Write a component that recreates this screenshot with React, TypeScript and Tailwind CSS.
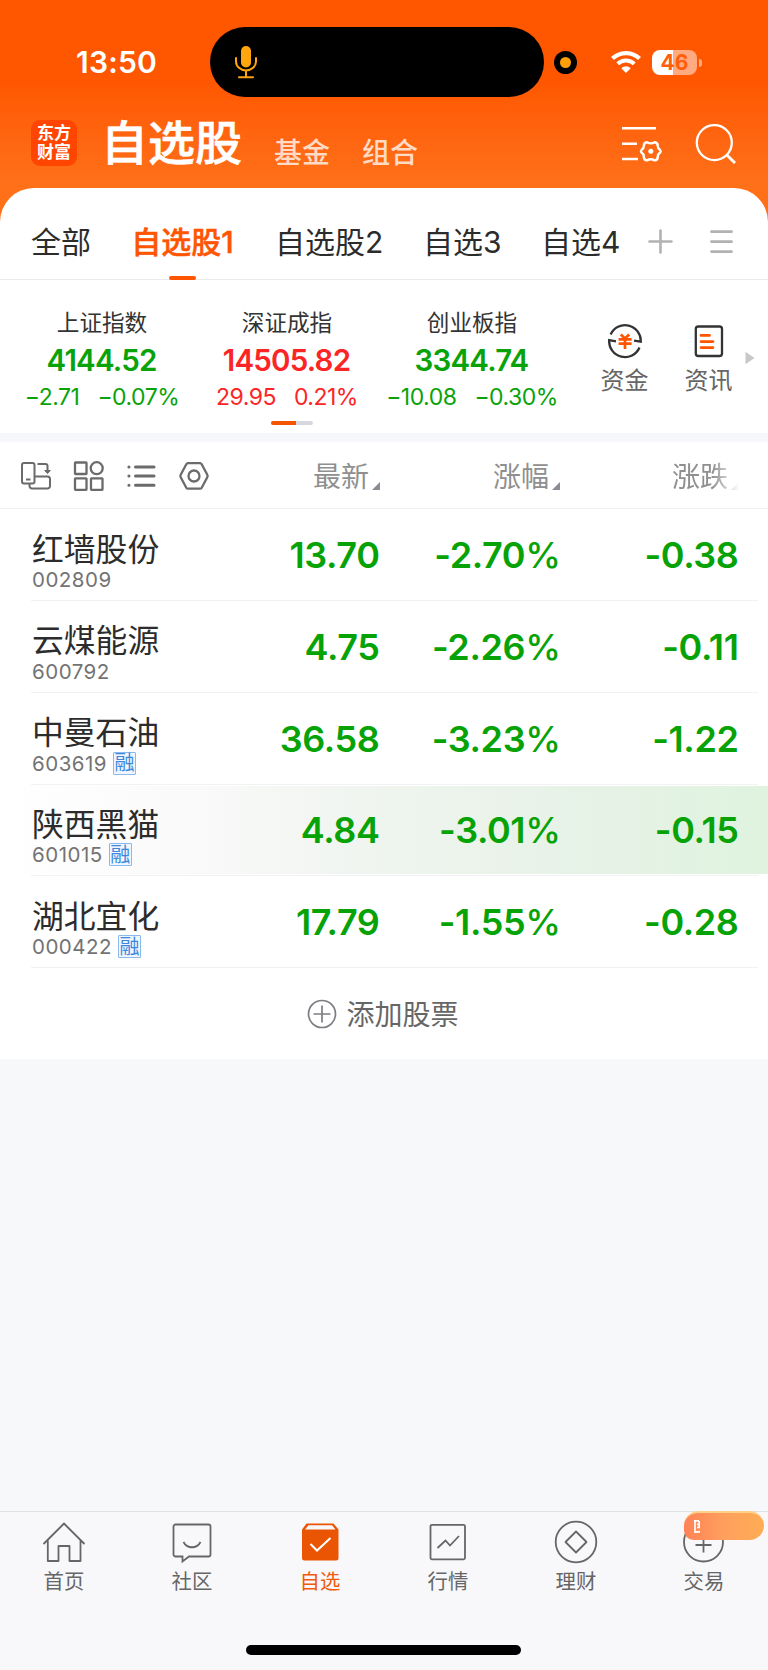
import React from 'react'

const tabs = [
  { name: '全部', width: 'w-[101px]' },
  { name: '自选股1', width: 'w-[143px]', active: true },
  { name: '自选股2', width: 'w-[148px]' },
  { name: '自选3', width: 'w-[118px]' },
  { name: '自选4', width: 'w-[90px]' },
]

const indices = [
  { name: '上证指数', value: '4144.52', change: '−2.71', percent: '−0.07%', color: 'text-[#09a309]' },
  { name: '深证成指', value: '14505.82', change: '29.95', percent: '0.21%', color: 'text-[#fb2526]' },
  { name: '创业板指', value: '3344.74', change: '−10.08', percent: '−0.30%', color: 'text-[#09a309]' },
]

const stocks = [
  { name: '红墙股份', code: '002809', price: '13.70', percent: '-2.70', change: '-0.38' },
  { name: '云煤能源', code: '600792', price: '4.75', percent: '-2.26', change: '-0.11' },
  { name: '中曼石油', code: '603619', price: '36.58', percent: '-3.23', change: '-1.22', margin: true },
  { name: '陕西黑猫', code: '601015', price: '4.84', percent: '-3.01', change: '-0.15', margin: true, flash: true },
  { name: '湖北宜化', code: '000422', price: '17.79', percent: '-1.55', change: '-0.28', margin: true },
]

function StatusBar() {
  return (
    <div className="flex h-[124px] items-start pt-[27px]">
      <div className="w-[210px] pl-[76px] text-[30px] leading-[71px] font-semibold tracking-[0.2px]">13:50</div>
      <div className="flex h-[70px] w-[334px] items-center rounded-full bg-black pl-[25px]">
        <svg width="22" height="33" viewBox="0 0 22 33" fill="none">
          <rect x="6" y="0" width="10" height="21.5" rx="5" fill="#ffa50d" />
          <path d="M1 12v3.5a10 9 0 0 0 20 0V12M11 24.5V31M4 31.2h14" stroke="#ffa50d" strokeWidth="2" strokeLinecap="round" />
        </svg>
      </div>
      <div className="mt-[24px] ml-[10px] flex h-[23px] w-[23px] items-center justify-center rounded-full bg-black">
        <div className="h-[11px] w-[11px] rounded-full bg-[#ff9f0a]" />
      </div>
      <svg className="mt-[24px] ml-[34px]" width="30" height="22" viewBox="0 0 30 22" fill="none">
        <path d="M1.5 7.6a19.3 19.3 0 0 1 27 0" stroke="#fff" strokeWidth="4.2" />
        <path d="M6.7 12.8a11.8 11.8 0 0 1 16.6 0" stroke="#fff" strokeWidth="4" />
        <path d="M10.3 17.3a6.6 6.6 0 0 1 9.4 0L15 22Z" fill="#fff" />
      </svg>
      <div className="mt-[23px] ml-[11px] flex items-center">
        <div className="flex h-[25px] w-[45px] items-center justify-center rounded-[8px] bg-linear-to-r from-white from-47% to-[#ffaa80] to-47% text-[21px] leading-none font-bold text-[#ff5e0b]">
          46
        </div>
        <div className="ml-[2px] h-[8px] w-[3px] rounded-r-full bg-[#ffaa80]" />
      </div>
    </div>
  )
}

function Header() {
  return (
    <header className="h-[225px] bg-linear-to-b from-[#ff5600] from-35% to-[#ff7019] to-82% text-white">
      <StatusBar />
      <div className="flex h-[63px] items-start">
        <div className="mt-[-4px] ml-[31px] flex h-[46px] w-[46px] flex-col items-center justify-center rounded-[9px] bg-[#ff4500] text-[17px] leading-[19px] font-bold">
          <span>东方</span>
          <span>财富</span>
        </div>
        <h1 className="mt-[-14px] ml-[24px] w-[148px] text-[47px] leading-[66px] font-medium [-webkit-text-stroke:0.6px_white]">自选股</h1>
        <div className="ml-[25px] w-[88px] text-[28px] leading-[58px] font-medium text-[#ffdac5]">基金</div>
        <div className="w-[199px] text-[28px] leading-[58px] font-medium text-[#ffdac5]">组合</div>
        <svg className="mt-[2px] ml-[60px]" width="42" height="37" viewBox="0 0 42 37" fill="none" stroke="#fff">
          <path d="M1 2.2h34M1 17.7h15M1 33h16" strokeWidth="2.5" />
          <path
            d="M26 16.2Q29.8 18.6 33.6 16.2Q36.8 16.6 36.8 20.2Q36.8 22.6 39.2 24.1Q40.1 25.3 39.2 26.5Q36.8 28 36.8 30.4Q36.8 34 33.6 34.4Q29.8 32 26 34.4Q22.8 34 22.8 30.4Q22.8 28 20.4 26.5Q19.5 25.3 20.4 24.1Q22.8 22.6 22.8 20.2Q22.8 16.6 26 16.2Z"
            strokeWidth="2.4"
            strokeLinejoin="round"
          />
          <circle cx="29.8" cy="25.3" r="2.5" fill="#fff" stroke="none" />
        </svg>
        <svg className="mt-[-1px] ml-[32px]" width="42" height="42" viewBox="0 0 42 42" fill="none" stroke="#fff" strokeWidth="2.3">
          <circle cx="19.3" cy="19.6" r="17.5" />
          <path d="M31.3 31.5 40 40" strokeWidth="3" />
        </svg>
      </div>
    </header>
  )
}

function GroupTabs() {
  return (
    <nav className="flex h-[92px] items-start border-b border-[#ebebeb] pl-[31px] text-[30px] text-[#2c2c2c]">
      {tabs.map(tab => (
        <div key={tab.name} className={tab.width}>
          {tab.active ? (
            <div className="flex w-[101px] flex-col items-center">
              <span className="mt-[26px] block leading-[56px] font-medium whitespace-nowrap text-[#ff5400] [-webkit-text-stroke:0.5px_#ff5400]">{tab.name}</span>
              <div className="mt-[6px] ml-[-1px] h-[4px] w-[27px] rounded-[2px] bg-[#ff5400]" />
            </div>
          ) : (
            <span className="mt-[26px] block leading-[56px] whitespace-nowrap">{tab.name}</span>
          )}
        </div>
      ))}
      <svg className="mt-[41px] ml-[17px]" width="25" height="25" viewBox="0 0 25 25" stroke="#b2b2b2" strokeWidth="2.6" strokeLinecap="round">
        <path d="M1.5 12.5h22M12.5 1.5v22" />
      </svg>
      <svg className="mt-[42px] ml-[37px]" width="23" height="24" viewBox="0 0 23 24" stroke="#b2b2b2" strokeWidth="2.8" strokeLinecap="round">
        <path d="M1.5 1.7h20M1.5 11.7h20M1.5 21.6h20" />
      </svg>
    </nav>
  )
}

function IndexPanel() {
  return (
    <section className="flex h-[153px] pl-[9.5px]">
      <div className="w-[555px]">
        <div className="flex h-[141px]">
          {indices.map(index => (
            <div key={index.name} className={`flex w-[185px] flex-col items-center pt-[26px] ${index.color}`}>
              <div className="text-[22.6px] leading-[34px] text-[#333]">{index.name}</div>
              <div className="mr-px text-[29.5px] leading-[40px] font-semibold tracking-[-0.8px]">{index.value}</div>
              <div className="flex gap-[18px] text-[23px] leading-[35px] tracking-[-0.5px] whitespace-nowrap">
                <span>{index.change}</span>
                <span>{index.percent}</span>
              </div>
            </div>
          ))}
        </div>
        <div className="ml-[261px] flex h-[4px] w-[42px] overflow-hidden rounded-[2px] bg-[#d7d8df]">
          <div className="w-[25px] bg-[#f55500]" />
        </div>
      </div>
      <div className="ml-[18px] flex w-[84px] flex-col items-center pt-[43px] text-[24px] leading-[36px] text-[#666]">
        <svg width="36" height="36" viewBox="0 0 36 36" fill="none">
          <path d="M3.6 11.5A15.8 15.8 0 0 1 33.8 18.6L27 17.7M32.5 24.5A15.8 15.8 0 0 1 2.2 17.2L9 18.3" stroke="#333" strokeWidth="2.3" />
          <path d="M13.8 11.5 18 15.5l4.2-4M11.6 16.3h13M11.6 20.7h13M18 15.5V26" stroke="#ff5400" strokeWidth="2.7" />
        </svg>
        <span className="mt-[4px]">资金</span>
      </div>
      <div className="flex w-[84px] flex-col items-center pt-[43px] text-[24px] leading-[36px] text-[#666]">
        <svg width="36" height="36" viewBox="0 0 36 36" fill="none">
          <rect x="4.8" y="3.5" width="26.2" height="29.5" rx="2.5" stroke="#333" strokeWidth="2.3" />
          <path d="M10 12.4h8.5M10 18.6h12M10 24.6h12" stroke="#ff5400" strokeWidth="2.7" strokeLinecap="round" />
        </svg>
        <span className="mt-[4px]">资讯</span>
      </div>
      <svg className="mt-[71px] ml-[-6px]" width="10" height="14" viewBox="0 0 10 14">
        <path d="M.5.8v12.4L9.5 7Z" fill="#c8c8c8" />
      </svg>
    </section>
  )
}

function SortMark() {
  return (
    <svg className="mb-[22px] ml-[3px]" width="8" height="8" viewBox="0 0 8 8">
      <path d="M8 0v8H0Z" fill="#8b8c93" />
    </svg>
  )
}

function ListToolbar() {
  return (
    <div className="flex h-[67px] items-center border-b border-[#f1f1f1] pr-[29px] text-[28px] text-[#8f8f8f]">
      <div className="mt-[2px] flex w-[212px] gap-[20.5px] pl-[20px]">
        <svg width="32" height="32" viewBox="0 0 32 32" fill="none" stroke="#6b6b6b" strokeWidth="2">
          <rect x="2" y="3" width="12.5" height="20.5" rx="2" />
          <path d="M6 19.5h4.5M17.5 4h8a2 2 0 0 1 2 2v6M9.5 24v2a2.5 2.5 0 0 0 2.5 2.5h15.5a2.5 2.5 0 0 0 2.5-2.5v-7a2.5 2.5 0 0 0-2.5-2.5H15" />
          <path d="M24.7 10.5h5.6L27.5 13.5Z" fill="#6b6b6b" strokeWidth="1" />
        </svg>
        <svg width="32" height="32" viewBox="0 0 32 32" fill="none" stroke="#6b6b6b" strokeWidth="2.3">
          <rect x="2" y="2.5" width="11.5" height="11.5" rx="0.5" />
          <circle cx="23.7" cy="8.2" r="6" />
          <rect x="2" y="18.3" width="11.5" height="11.5" rx="0.5" />
          <rect x="18" y="18.3" width="11.5" height="11.5" rx="0.5" />
        </svg>
        <svg width="32" height="32" viewBox="0 0 32 32" stroke="#6b6b6b" strokeWidth="3" strokeLinecap="round">
          <path d="M10.5 7H29M10.5 16H29M10.5 25.2H29M3.9 7h.1M3.9 16h.1M3.9 25.2h.1" />
        </svg>
        <svg width="32" height="32" viewBox="0 0 32 32" fill="none" stroke="#6b6b6b" strokeWidth="2.3" strokeLinejoin="round">
          <path d="M10 3.2h12a2 2 0 0 1 1.7 1l5.6 10.5a2.5 2.5 0 0 1 0 2.5l-5.6 10.5a2 2 0 0 1-1.7 1H10a2 2 0 0 1-1.7-1L2.7 17.2a2.5 2.5 0 0 1 0-2.5L8.300 4.200a2 2 0 0 1 1.700-1Z" />
          <circle cx="16" cy="16" r="5.5" />
        </svg>
      </div>
      <div className="flex w-[168px] items-end justify-end pt-[4px] leading-[70px]">最新<SortMark /></div>
      <div className="flex w-[180px] items-end justify-end pt-[4px] leading-[70px]">涨幅<SortMark /></div>
      <div className="flex w-[179px] items-end justify-end mask-r-from-85% mask-r-to-100% pt-[4px] leading-[70px]">涨跌<SortMark /></div>
    </div>
  )
}

function StockRow({ stock }: { stock: (typeof stocks)[number] }) {
  return (
    <div className="h-[91.75px] pt-[2px]">
      <div className={`flex h-[88px] pl-[32px] ${stock.flash ? 'bg-[linear-gradient(to_right,#fff,#f8f9f8_28%,#eff4ef_50%,#e6f2e6_78%,#dff3df)]' : ''}`}>
        <div className="w-[168px] pt-[14.5px]">
          <div className="text-[31.8px] leading-[48px] text-[#2c2c2c]">{stock.name}</div>
          <div className="mt-[-5.5px] flex h-[23px] items-center text-[20.5px] tracking-[0.5px] text-[#737373]">
            <span className="leading-[23px]">{stock.code}</span>
            {stock.margin && (
              <span className="ml-[6px] flex h-[23px] w-[23px] items-center justify-center rounded-[1px] border border-[#8ab9ef] bg-[#f0f6fd] text-[20px] leading-none tracking-normal text-[#3d87dc]">融</span>
            )}
          </div>
        </div>
        <div className="flex pt-[19px] text-right text-[36px] leading-[50px] font-semibold tracking-[-0.4px] text-[#06a206]">
          <div className="w-[179.5px]">{stock.price}</div>
          <div className="w-[181px]">
            {stock.percent}
            <span className="font-medium">%</span>
          </div>
          <div className="w-[178px]">{stock.change}</div>
        </div>
      </div>
      <div className="mt-px mr-[10px] ml-[31px] h-px bg-[#f2f2f4]" />
    </div>
  )
}

function TabItem({ label, active, children }: { label: string; active?: boolean; children: React.ReactNode }) {
  return (
    <div className={`flex w-[128px] flex-col items-center pt-[8px] text-[20.4px] leading-[30px] ${active ? 'text-[#f05a0a]' : 'text-[#666]'}`}>
      <svg width="44" height="44" viewBox="0 0 44 44" fill="none" stroke="currentColor" strokeWidth="1.8">
        {children}
      </svg>
      <span className="mt-[3px]">{label}</span>
    </div>
  )
}

function BottomBar() {
  return (
    <footer className="relative flex h-[159px] flex-col items-center border-t border-[#e0e1e4] bg-[#f8f8fb]">
      <div className="flex h-[133px]">
        <TabItem label="首页">
          <path d="M1.5 24 22 3.5 42.5 24M5.8 20v21H16.5V26H27.5V41H38.5V20" strokeLinejoin="round" />
        </TabItem>
        <TabItem label="社区">
          <path d="M5.5 4.5h33a2 2 0 0 1 2 2v28a2 2 0 0 1-2 2H19l-6.5 5v-5h-7a2 2 0 0 1-2-2v-28a2 2 0 0 1 2-2Z" />
          <path d="M13.5 22c3.5 7 13.5 7 17 0" />
        </TabItem>
        <TabItem label="自选" active>
          <path d="M8.5 3.5h27l5 6v28.5a2.5 2.5 0 0 1-2.5 2.5H6.5a2.5 2.5 0 0 1-2.5-2.5v-28.500Z" fill="#ea5504" stroke="none" />
          <path d="M10.5 5.3h23.5l3.5 4.2H7Z" fill="#f8f8fb" stroke="none" />
          <path d="M12.5 24 19 30.5 32.5 18" stroke="#fff" strokeWidth="2" />
        </TabItem>
        <TabItem label="行情">
          <rect x="4.5" y="4.8" width="34.5" height="34.5" rx="1.5" />
          <path d="M11.5 28l8-7.5 4.5 5L33 16" />
        </TabItem>
        <TabItem label="理财">
          <circle cx="22" cy="22" r="20.3" />
          <path d="M22 11.5 32.5 22 22 32.5 11.500 22Z" strokeLinejoin="round" />
        </TabItem>
        <TabItem label="交易">
          <circle cx="21.5" cy="22" r="19.5" />
          <path d="M21.5 15v17.5M13.500 25h16" />
        </TabItem>
      </div>
      <div className="mr-px h-[10px] w-[275px] rounded-full bg-black" />
      {/* Promo bubble over the trade tab */}
      <div className="absolute top-[-1px] right-[4px] flex h-[29px] w-[80px] items-center rounded-t-[15px] rounded-r-[15px] rounded-bl-[10px] border-t-2 border-[#ffd08a] bg-linear-to-r from-[#ff8257] via-[#ff9f5d] to-[#ffad55] pl-[10px]">
        <svg width="6" height="13" viewBox="0 0 6 13" fill="none" stroke="#fff" strokeWidth="1.7">
          <path d="M1 0v13M0 .8h5M3 4.3h3M3 7.5h3M5.2 1v7M1 11.8h5" />
        </svg>
      </div>
    </footer>
  )
}

export default function App() {
  return (
    <main className="flex h-[1670px] w-[768px] flex-col overflow-hidden bg-[#f7f8fa] font-['Inter','Noto_Sans_CJK_SC',sans-serif]">
      <Header />
      <div className="mt-[-37px] rounded-t-[34px] bg-white">
        <GroupTabs />
        <IndexPanel />
      </div>
      <div className="h-[9px] bg-[#f5f7fa]" />
      <div className="h-[617px] bg-white">
        <ListToolbar />
        {stocks.map(stock => (
          <StockRow key={stock.code} stock={stock} />
        ))}
        <div className="flex h-[92px] items-center justify-center gap-[9px] pr-[2px] text-[28px] text-[#666]">
          <svg width="30" height="30" viewBox="0 0 30 30" fill="none" stroke="#7c7c82" strokeWidth="1.7">
            <circle cx="15" cy="15" r="13.5" />
            <path d="M6.5 15h17M15 6.5v17" />
          </svg>
          <span className="pt-[2px]">添加股票</span>
        </div>
      </div>
      <div className="flex-1" />
      <BottomBar />
    </main>
  )
}
